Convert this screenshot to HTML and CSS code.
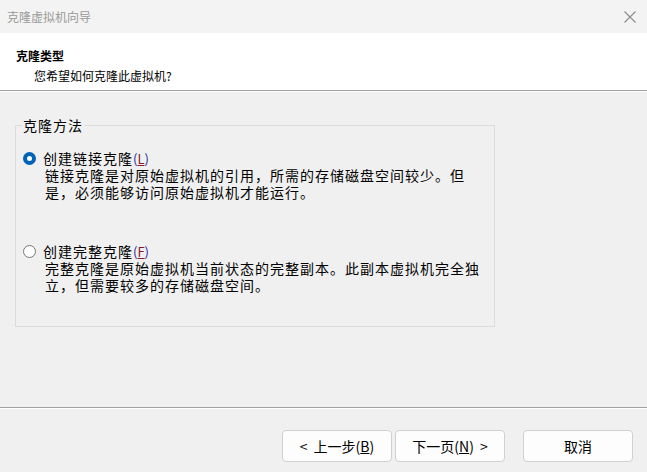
FILE: index.html
```html
<!DOCTYPE html>
<html>
<head>
    <title>克隆虚拟机向导</title>
    <link rel="stylesheet" href="styles.css">
</head>
<body>
    <div class="wizard">
        <div class="titlebar">
            <span class="title">克隆虚拟机向导</span>
            <svg class="close" width="12" height="12" viewBox="0 0 12 12">
                <path d="M0.5 0.5 L11.5 11.5 M11.5 0.5 L0.5 11.5" stroke="#8c8c8c" stroke-width="1.1" fill="none"/>
            </svg>
        </div>
        <!-- Header -->
        <div class="header">
            <div class="header-title">克隆类型</div>
            <div class="header-sub">您希望如何克隆此虚拟机?</div>
        </div>
        <!-- Content -->
        <div class="content">
            <fieldset class="group">
                <legend>克隆方法</legend>
                <div class="option">
                    <div class="option-row">
                        <span class="radio checked"></span>
                        <span class="label">创建链接克隆<span class="key">(<u>L</u>)</span></span>
                    </div>
                    <p class="desc">链接克隆是对原始虚拟机的引用，所需的存储磁盘空间较少。但是，必须能够访问原始虚拟机才能运行。</p>
                </div>
                <div class="option">
                    <div class="option-row">
                        <span class="radio"></span>
                        <span class="label">创建完整克隆<span class="key">(<u>F</u>)</span></span>
                    </div>
                    <p class="desc">完整克隆是原始虚拟机当前状态的完整副本。此副本虚拟机完全独立，但需要较多的存储磁盘空间。</p>
                </div>
            </fieldset>
        </div>
        <!-- Buttons -->
        <div class="footer">
            <button class="btn"><span class="arrow">&lt;</span>上一步(<u>B</u>)</button>
            <button class="btn">下一页(<u>N</u>)<span class="arrow right">&gt;</span></button>
            <button class="btn cancel">取消</button>
        </div>
    </div>
</body>
</html>
```

FILE: styles.css
```css
body {
    margin: 0;
    font-family: "Noto Sans CJK SC", "Noto Sans", sans-serif;
    background-color: #f0f0f0;
    color: #000;
}

.wizard {
    width: 647px;
    height: 472px;
    display: flex;
    flex-direction: column;
    overflow: hidden;
}

.titlebar {
    height: 33px;
    background-color: #f3f3f3;
    display: flex;
    align-items: center;
    justify-content: space-between;
    padding: 0 11px 0 7px;
    flex-shrink: 0;
}

.title {
    font-size: 12px;
    color: #9a9a9a;
    line-height: 1;
}

.close {
    display: block;
}

/* Header */
.header {
    background-color: #fff;
    height: 58px;
    border-bottom: 1px solid #a0a0a0;
    box-shadow: 0 1px 0 #fff;
    box-sizing: border-box;
    padding: 15px 0 0 16px;
    flex-shrink: 0;
}

.header-title {
    font-size: 12px;
    font-weight: bold;
    line-height: 16px;
}

.header-sub {
    font-size: 12px;
    line-height: 16px;
    margin-top: 4px;
    padding-left: 18px;
}

/* Content */
.content {
    flex: 1;
    padding: 26px 0 0 15px;
}

.group {
    width: 480px;
    height: 210px;
    box-sizing: border-box;
    margin: 0;
    border: 1px solid #dcdcdc;
    padding: 15px 0 0 7px;
    font-size: 14px;
    letter-spacing: 1px;
}

.group legend {
    padding: 0 1px;
    margin-left: -1px;
    line-height: 17px;
}

.option {
    margin-bottom: 41px;
}

.option-row {
    display: flex;
    align-items: center;
    height: 18px;
}

.radio {
    width: 13px;
    height: 13px;
    border: 1px solid #777;
    border-radius: 50%;
    box-sizing: border-box;
    margin-right: 7px;
    background-color: #fff;
}

.radio.checked {
    border: 4px solid #0063b8;
}

.label {
    line-height: 16px;
}

.key {
    font-size: 13px;
    line-height: 1;
    letter-spacing: 0;
    color: #1b2a9a;
}

.key u {
    color: #8a1a2a;
}

.desc {
    margin: 0;
    padding-left: 22px;
    width: 440px;
    line-height: 17px;
}

/* Footer */
.footer {
    height: 65px;
    border-top: 1px solid #a0a0a0;
    box-shadow: inset 0 1px 0 #fff;
    display: flex;
    justify-content: flex-end;
    align-items: flex-start;
    padding: 22px 14px 0 0;
    box-sizing: border-box;
    flex-shrink: 0;
}

.btn {
    width: 110px;
    height: 32px;
    background-color: #fdfdfd;
    border: 1px solid #d0d0d0;
    border-radius: 4px;
    font-family: "Noto Sans CJK SC", "Noto Sans", sans-serif;
    font-size: 14px;
    color: #000;
    margin-left: 3px;
    padding: 0;
}

.arrow {
    margin-right: 6px;
}

.arrow.right {
    margin: 0 0 0 6px;
}

.btn.cancel {
    margin-left: 18px;
}
```
